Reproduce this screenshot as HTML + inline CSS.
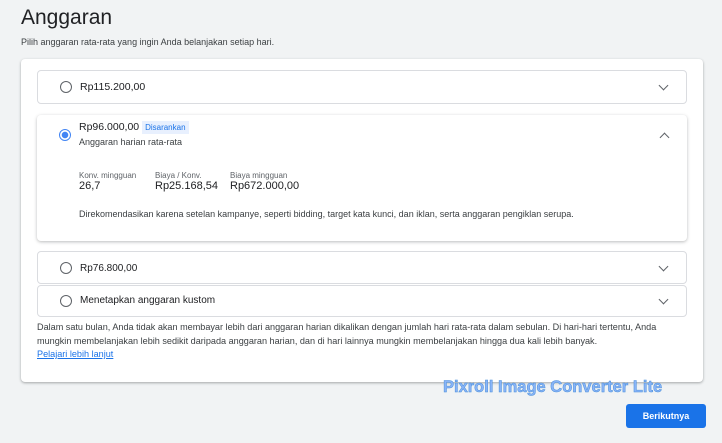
<!DOCTYPE html>
<html><head><style>
body{margin:0;width:722px;height:443px;background:#f1f3f4;font-family:"Liberation Sans",sans-serif;color:#3c4043;position:relative;overflow:hidden}
.a{position:absolute}
h1{position:absolute;left:21px;top:6px;margin:0;font-weight:400;font-size:21px;color:#202124}
.card{left:21px;top:59px;width:682px;height:323px;background:#fff;border-radius:4px;box-shadow:0 1px 2px rgba(60,64,67,.3),0 1px 3px rgba(60,64,67,.15)}
.it{left:37px;width:650px;background:#fff;border:1px solid #dadce0;border-radius:4px;box-sizing:border-box}
.r{position:absolute;left:22px;width:10px;height:10px;border:1.6px solid #5f6368;border-radius:50%}
.lbl{position:absolute;left:42px;font-size:10.5px;color:#202124}
.chev{position:absolute;right:19px;width:6px;height:6px;border-right:1.4px solid #5f6368;border-bottom:1.4px solid #5f6368;transform:rotate(45deg)}
.s{font-size:8px;color:#5f6368}
.v{font-size:11px;color:#202124}
</style></head><body>
<h1>Anggaran</h1>
<div class="a" style="left:21px;top:37px;font-size:9px;color:#3c4043">Pilih anggaran rata-rata yang ingin Anda belanjakan setiap hari.</div>
<div class="a card"></div>
<div class="a it" style="top:70px;height:34px"><div class="r" style="top:10px"></div><div class="lbl" style="top:10px">Rp115.200,00</div><div class="chev" style="top:11px"></div></div>
<div class="a it" style="top:115px;height:126px;border:none;box-shadow:0 1px 3px rgba(60,64,67,.35)">
<div class="r" style="top:14px;border-color:#4285f4;background:radial-gradient(#4285f4 3px,#fff 3.5px)"></div>
<div class="lbl" style="top:6px">Rp96.000,00 <span style="font-size:8px;color:#1a73e8;background:#e8f0fe;padding:2px 3px">Disarankan</span></div>
<div class="lbl" style="top:22px;font-size:9px;color:#3c4043">Anggaran harian rata-rata</div>
<div class="chev" style="top:19px;transform:rotate(-135deg)"></div>
<div class="a" style="left:42px;top:56px"><div class="s">Konv. mingguan</div><div class="v">26,7</div></div>
<div class="a" style="left:118px;top:56px"><div class="s">Biaya / Konv.</div><div class="v">Rp25.168,54</div></div>
<div class="a" style="left:193px;top:56px"><div class="s">Biaya mingguan</div><div class="v">Rp672.000,00</div></div>
<div class="a" style="left:42px;top:94px;font-size:9px">Direkomendasikan karena setelan kampanye, seperti bidding, target kata kunci, dan iklan, serta anggaran pengiklan serupa.</div>
</div>
<div class="a it" style="top:251px;height:33px"><div class="r" style="top:10px"></div><div class="lbl" style="top:11px;font-size:10px">Rp76.800,00</div><div class="chev" style="top:11px"></div></div>
<div class="a it" style="top:285px;height:32px"><div class="r" style="top:9px"></div><div class="lbl" style="top:9px;font-size:10px">Menetapkan anggaran kustom</div><div class="chev" style="top:10px"></div></div>
<div class="a" style="left:37px;top:321px;width:652px;font-size:9.1px;line-height:13.5px">Dalam satu bulan, Anda tidak akan membayar lebih dari anggaran harian dikalikan dengan jumlah hari rata-rata dalam sebulan. Di hari-hari tertentu, Anda mungkin membelanjakan lebih sedikit daripada anggaran harian, dan di hari lainnya mungkin membelanjakan hingga dua kali lebih banyak.<br><span style="color:#1a73e8;text-decoration:underline">Pelajari lebih lanjut</span></div>
<div class="a" style="left:443px;top:378px;font-size:16.5px;font-weight:700;color:#8ab4f8;-webkit-text-stroke:0.5px #4a90d9">Pixroll Image Converter Lite</div>
<div class="a" style="left:626px;top:404px;width:80px;height:24px;background:#1a73e8;border-radius:3px;color:#fff;font-size:9px;font-weight:700;text-align:center;line-height:24px">Berikutnya</div>
</body></html>
